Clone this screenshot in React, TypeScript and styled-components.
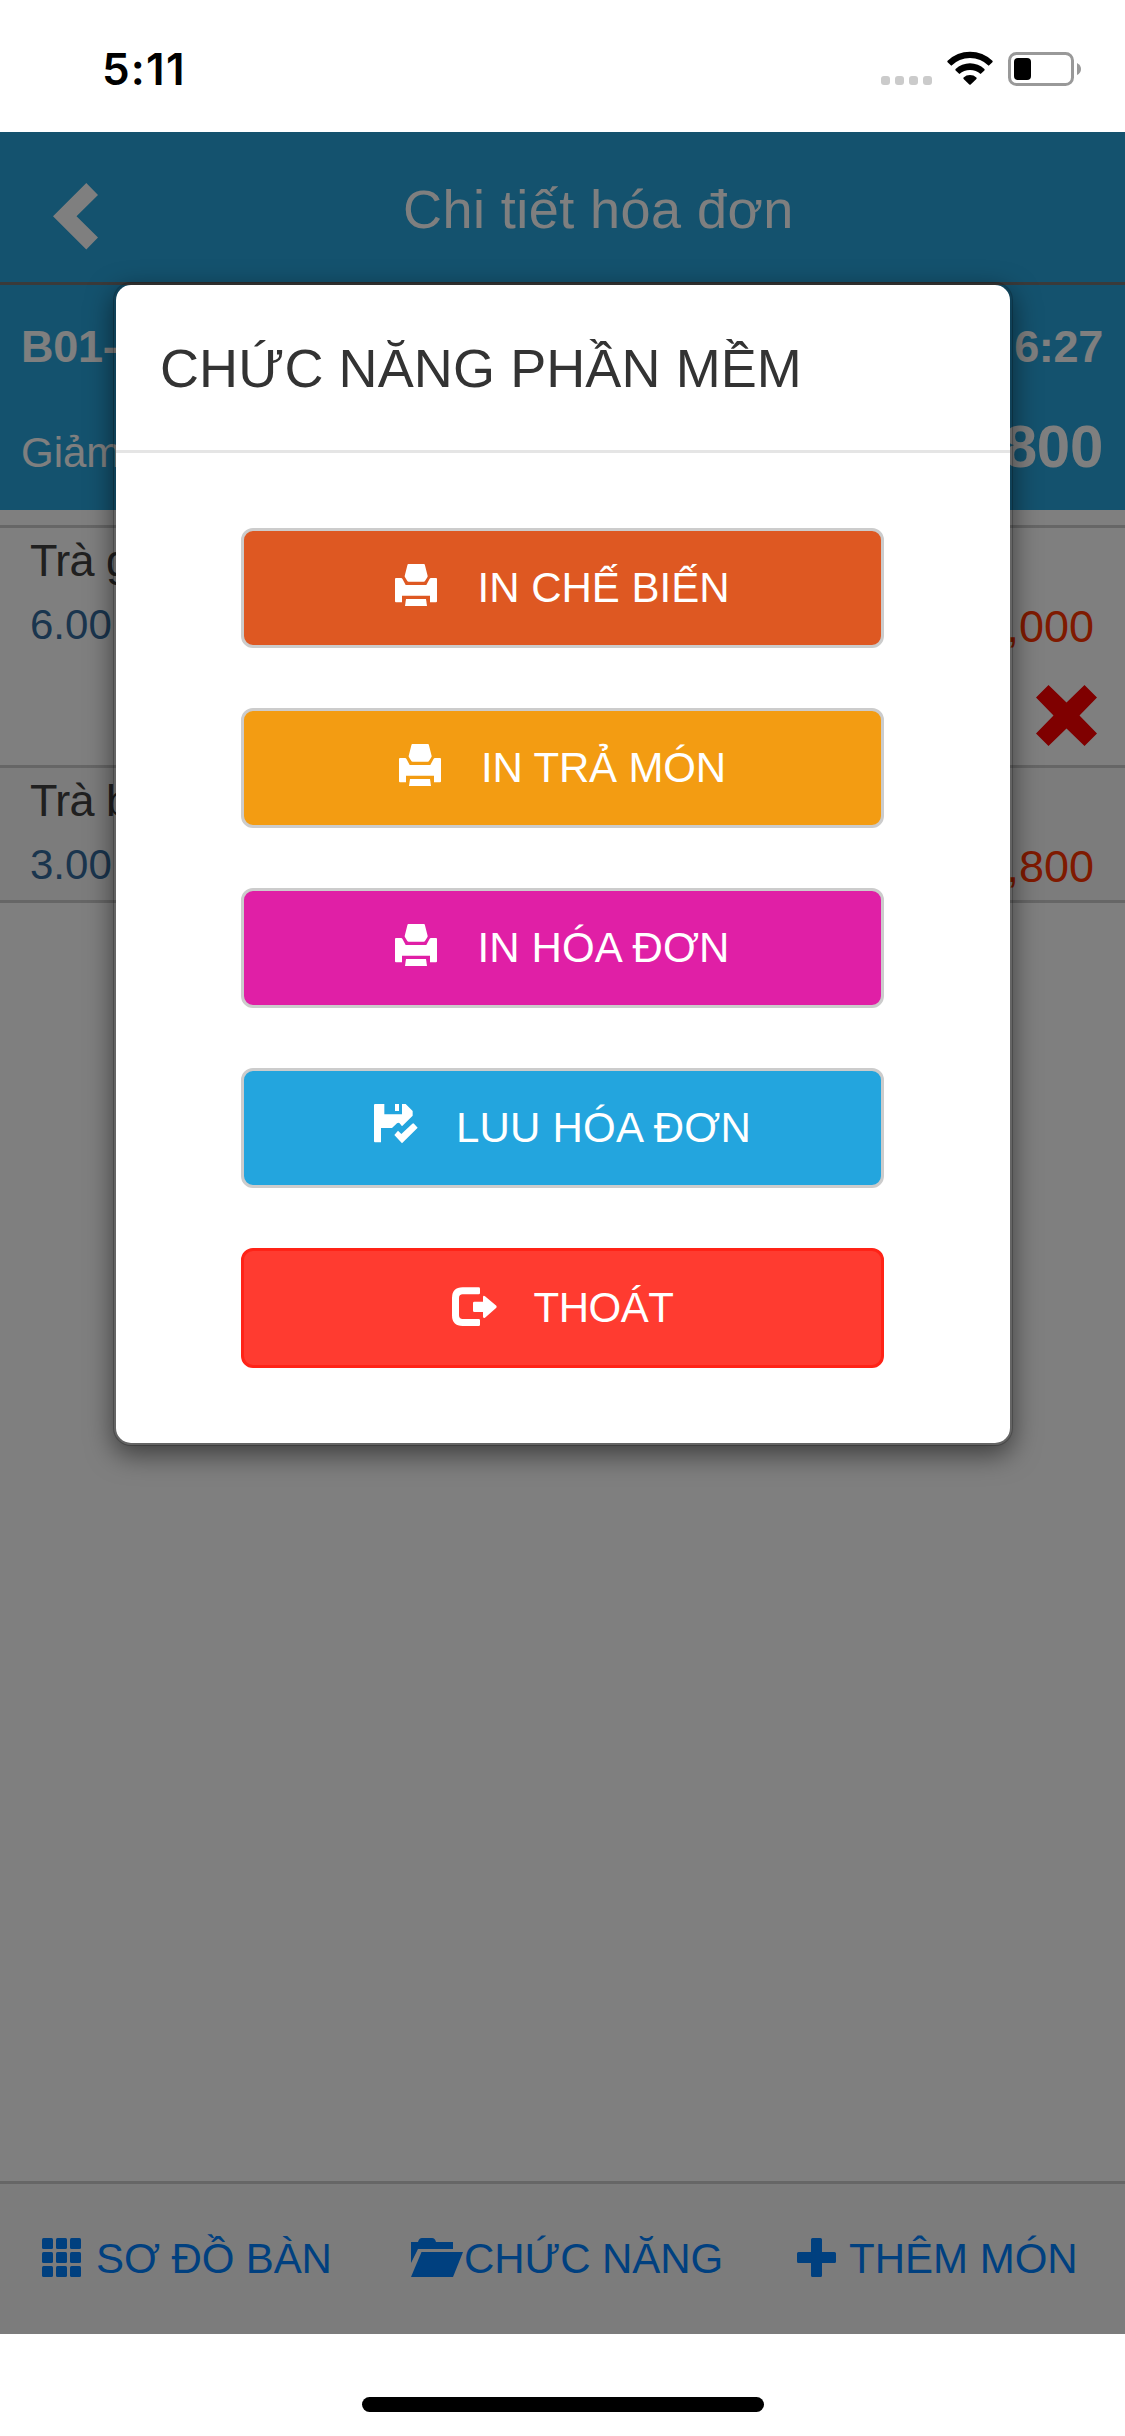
import React from "react";
import styled, { createGlobalStyle } from "styled-components";

const GlobalStyle = createGlobalStyle`
  * { box-sizing: border-box; }
  body { margin: 0; background: #fff; }
`;

const Screen = styled.div`
  position: relative;
  width: 1125px;
  height: 2436px;
  overflow: hidden;
  display: flex;
  flex-direction: column;
  background: #fff;
  font-family: "Liberation Sans", "Helvetica Neue", Arial, sans-serif;
`;

const StatusBar = styled.div`
  height: 132px;
  flex: none;
  display: flex;
  align-items: flex-start;
  padding: 39px 44px 0 102px;
`;

const Clock = styled.div`
  font-family: Inter, sans-serif;
  font-weight: 600;
  font-size: 44px;
  line-height: 60px;
  letter-spacing: 1.2px;
  color: #000;
  margin-right: auto;
`;

const Signal = styled.div`
  display: flex;
  gap: 5px;
  margin: 37px 15px 0 0;
`;

const SignalDot = styled.span`
  width: 9px;
  height: 9px;
  border-radius: 3px;
  background: #cbcbcb;
`;

const WifiIcon = styled.svg`
  width: 46px;
  height: 34px;
  margin: 12px 15px 0 0;
`;

const Battery = styled.svg`
  width: 73px;
  height: 34px;
  margin-top: 13px;
`;

const AppArea = styled.div`
  position: relative;
  height: 2202px;
  flex: none;
  display: flex;
  flex-direction: column;
  background: #fff;
`;

const Header = styled.header`
  height: 153px;
  display: flex;
  align-items: flex-start;
  padding-left: 53px;
  background: #28a4dc;
  border-bottom: 3px solid #747474;
`;

const BackIcon = styled.svg`
  width: 45px;
  height: 67px;
  margin-top: 51px;
`;

const PageTitle = styled.h1`
  margin: 47px 0 0 305px;
  font-size: 54px;
  font-weight: 400;
  line-height: 60px;
  letter-spacing: 0.45px;
  color: #fff;
  white-space: nowrap;
`;

const Summary = styled.section`
  height: 225px;
  padding: 32px 22px 0 21px;
  display: flex;
  flex-direction: column;
  gap: 40px;
  background: #28a4dc;
  color: #fff;
`;

const SummaryLine = styled.div`
  display: flex;
  justify-content: space-between;
  align-items: baseline;
  height: 60px;
`;

const SummaryText = styled.span<{ $size: number; $bold?: boolean }>`
  font-size: ${(p) => p.$size}px;
  font-weight: ${(p) => (p.$bold ? 700 : 400)};
  line-height: 60px;
  letter-spacing: ${(p) => (p.$bold ? -0.3 : 0)}px;
`;

const List = styled.main`
  flex: 1;
  padding-top: 15px;
`;

const ListItem = styled.article<{ $height: number; $striped?: boolean }>`
  height: ${(p) => p.$height}px;
  padding: 3px 28px 0 30px;
  border-top: 3px solid #ccc;
  display: flex;
  flex-direction: column;
  background: ${(p) => (p.$striped ? "#f9f9f9" : "#fff")};
`;

const ListEnd = styled.div`
  height: 3px;
  background: #ccc;
`;

const ItemName = styled.div`
  font-size: 45px;
  line-height: 60px;
  letter-spacing: -0.6px;
  color: #404040;
`;

const ItemMeta = styled.div`
  display: flex;
  justify-content: space-between;
  margin-top: 4px;
  padding-right: 3px;
`;

const Quantity = styled.span`
  font-size: 42px;
  line-height: 60px;
  color: #346a9c;
`;

const Price = styled.span`
  font-size: 45px;
  line-height: 60px;
  padding-top: 2px;
  color: #ff3400;
`;

const RemoveIcon = styled.svg`
  width: 61px;
  height: 61px;
  margin-top: 28px;
  align-self: flex-end;
`;

const Footer = styled.footer`
  height: 153px;
  padding-left: 42px;
  display: flex;
  align-items: center;
  border-top: 3px solid #ccc;
  background: #f8f8f8;
  color: #0080ff;
`;

const FooterItem = styled.div<{ $width: number; $gap: number; $spacing: number }>`
  width: ${(p) => p.$width}px;
  display: flex;
  align-items: center;
  gap: ${(p) => p.$gap}px;
  font-size: 42px;
  line-height: 60px;
  letter-spacing: ${(p) => p.$spacing}px;
  white-space: nowrap;

  svg {
    flex: none;
    height: 39px;
    margin-bottom: 3px;
  }
`;

const Backdrop = styled.div`
  position: absolute;
  inset: 0;
  background: rgba(0, 0, 0, 0.5);
`;

const Dialog = styled.div`
  position: absolute;
  top: 150px;
  left: 113px;
  width: 900px;
  background: #fff;
  background-clip: padding-box;
  border: 3px solid rgba(0, 0, 0, 0.2);
  border-radius: 18px;
  box-shadow: 0 9px 27px rgba(0, 0, 0, 0.5);
`;

const DialogHeader = styled.div`
  height: 168px;
  padding-left: 44px;
  display: flex;
  align-items: center;
  border-bottom: 3px solid #e5e5e5;
`;

const DialogTitle = styled.h2`
  margin: 0;
  font-size: 54px;
  font-weight: 400;
  line-height: 60px;
  letter-spacing: 0.1px;
  color: #333;
  white-space: nowrap;
`;

const DialogBody = styled.div`
  padding: 75px 126px 75px 125px;
  display: flex;
  flex-direction: column;
  gap: 60px;
`;

const ActionButton = styled.button<{ $bg: string; $border?: string; $spacing?: number }>`
  height: 120px;
  padding: 0;
  display: flex;
  align-items: center;
  justify-content: center;
  gap: 40px;
  border: 3px solid ${(p) => p.$border ?? "#ccc"};
  border-radius: 12px;
  background: ${(p) => p.$bg};
  color: #fff;
  font-family: inherit;
  font-size: 42px;
  line-height: 60px;
  letter-spacing: ${(p) => p.$spacing ?? 0}px;

  svg {
    flex: none;
    width: 42px;
    height: 42px;
    margin-bottom: 6px;
    overflow: visible;
  }
`;

const HomeArea = styled.div`
  flex: 1;
  display: flex;
  justify-content: center;
  padding-top: 63px;
`;

const HomeIndicator = styled.div`
  width: 402px;
  height: 15px;
  border-radius: 8px;
  background: #000;
`;

const PrinterIcon = () => (
  <svg viewBox="0 0 126 126" fill="currentColor">
    <path d="M40 0H87Q89 0 89.500 2L98 36Q98 38 97 40L90 51Q89 53 86 53H41Q38 53 37 51L30 40Q29 38 29 36L37.500 2Q38 0 40 0Z" />
    <path d="M0 45Q0 42 3 42H18Q21 42 22.500 45L32 63H94L103.500 45Q105 42 108 42H123Q126 42 126 45V112Q126 115 123 115H105V95H21V115H3Q0 115 0 112Z" />
    <path d="M33 105H93L96 126H30Z" />
  </svg>
);

const SaveIcon = () => (
  <svg viewBox="0 0 126 126" fill="currentColor">
    <path d="M3 0H31V31H84V0H95L116 21V35L84 67L77 58Q73 54 69 58L54 72H21V115H3Q0 115 0 112V3Q0 0 3 0Z" />
    <path d="M63 0H75V21H63Z" />
    <path d="M61 93L72 80L82 90L115 59Q118 57 120 59L131 71L84 118Z" />
  </svg>
);

const ExitIcon = () => (
  <svg viewBox="0 -10 126 126" fill="currentColor">
    <path d="M84 4V17Q84 21 80 21H32Q21 21 21 32V84Q21 95 32 95H80Q84 95 84 99V112Q84 116 80 116H32Q0 116 0 84V32Q0 0 32 0H80Q84 0 84 4Z" />
    <path d="M67 43H93V29Q94 23 99 27L133 55Q135 58 133 61L99 91Q94 94 93 88V74H67Q63 74 63 70V47Q63 43 67 43Z" />
  </svg>
);

const GridIcon = () => (
  <svg width="39" height="39" viewBox="0 0 39 39" fill="currentColor">
    {[0, 14, 28].map((x) =>
      [0, 14, 28].map((y) => <rect key={`${x}-${y}`} x={x} y={y} width="11" height="11" rx="1.500" />)
    )}
  </svg>
);

const FolderIcon = () => (
  <svg width="52" height="39" viewBox="0 0 52 39" fill="currentColor">
    <path d="M0 4H7Q8 0 11 0H21Q24 0 25 4H42V11H7L0 25Z" />
    <path d="M10.500 14H52L42 39H0Z" />
  </svg>
);

const PlusIcon = () => (
  <svg width="39" height="39" viewBox="0 0 39 39" fill="currentColor">
    <path d="M15.500 0H23.500Q25 0 25 1.500V14H37.500Q39 14 39 15.500V23.500Q39 25 37.500 25H25V37.500Q25 39 23.500 39H15.500Q14 39 14 37.500V25H1.500Q0 25 0 23.500V15.500Q0 14 1.500 14H14V1.500Q14 0 15.500 0Z" />
  </svg>
);

export default function App() {
  return (
    <Screen>
      <GlobalStyle />
      <StatusBar>
        <Clock>5:11</Clock>
        <Signal>
          <SignalDot />
          <SignalDot />
          <SignalDot />
          <SignalDot />
        </Signal>
        <WifiIcon viewBox="0 0 46 34">
          <path d="M0.600 9.800A32 32 0 0 1 45.400 9.800Q46 10.500 45.400 11.200L41.700 14.800A26.500 26.500 0 0 0 4.300 14.800L0.600 11.200Q0 10.500 0.600 9.800Z" />
          <path d="M8.600 18.100A20.500 20.500 0 0 1 37.400 18.100Q38 18.800 37.400 19.500L33.600 23.100A15.500 15.500 0 0 0 12.400 23.100L8.600 19.500Q8 18.800 8.600 18.100Z" />
          <path d="M16.600 26.500A9.500 9.500 0 0 1 29.400 26.500Q30 27.200 29.400 27.900L23.700 33.400Q23 34 22.300 33.400L16.600 27.900Q16 27.200 16.600 26.500Z" />
        </WifiIcon>
        <Battery viewBox="0 0 73 34">
          <rect x="1.500" y="1.500" width="63" height="31" rx="7" fill="none" stroke="#999" strokeWidth="3" />
          <rect x="6" y="6" width="17" height="22" rx="4" fill="#000" />
          <path d="M69 11Q73 13 73 17Q73 21 69 23Z" fill="#999" />
        </Battery>
      </StatusBar>
      <AppArea>
        <Header>
          <BackIcon viewBox="0 0 45 67" fill="#fff">
            <path d="M0 33.200L33.300 0L45 12L23.500 33.200L45 54.500L33.300 66.500Z" />
          </BackIcon>
          <PageTitle>Chi tiết hóa đơn</PageTitle>
        </Header>
        <Summary>
          <SummaryLine>
            <SummaryText $size={45} $bold>B01-</SummaryText>
            <SummaryText $size={45} $bold>6:27</SummaryText>
          </SummaryLine>
          <SummaryLine>
            <SummaryText $size={42}>Giảm</SummaryText>
            <SummaryText $size={60} $bold>800</SummaryText>
          </SummaryLine>
        </Summary>
        <List>
          <ListItem $height={240}>
            <ItemName>Trà g</ItemName>
            <ItemMeta>
              <Quantity>6.00</Quantity>
              <Price>,000</Price>
            </ItemMeta>
            <RemoveIcon viewBox="0 0 61 61" fill="#f00">
              <path d="M12.500 0L30.500 17.500L48.500 0L61 12.500L43.500 30.500L61 48.500L48.500 61L30.500 43.500L12.500 61L0 48.500L17.500 30.500L0 12.500Z" />
            </RemoveIcon>
          </ListItem>
          <ListItem $height={135} $striped>
            <ItemName>Trà b</ItemName>
            <ItemMeta>
              <Quantity>3.00</Quantity>
              <Price>,800</Price>
            </ItemMeta>
          </ListItem>
          <ListEnd />
        </List>
        <Footer>
          <FooterItem $width={369} $gap={15} $spacing={-0.1}>
            <GridIcon />
            SƠ ĐỒ BÀN
          </FooterItem>
          <FooterItem $width={386} $gap={1} $spacing={-0.1}>
            <FolderIcon />
            CHỨC NĂNG
          </FooterItem>
          <FooterItem $width={286} $gap={13} $spacing={0}>
            <PlusIcon />
            THÊM MÓN
          </FooterItem>
        </Footer>
        <Backdrop />
        <Dialog>
          <DialogHeader>
            <DialogTitle>CHỨC NĂNG PHẦN MỀM</DialogTitle>
          </DialogHeader>
          <DialogBody>
            <ActionButton $bg="#de5822">
              <PrinterIcon />
              IN CHẾ BIẾN
            </ActionButton>
            <ActionButton $bg="#f39c12" $spacing={-0.15}>
              <PrinterIcon />
              IN TRẢ MÓN
            </ActionButton>
            <ActionButton $bg="#e01fa6" $spacing={0.15}>
              <PrinterIcon />
              IN HÓA ĐƠN
            </ActionButton>
            <ActionButton $bg="#23a5de" $spacing={0.2}>
              <SaveIcon />
              LUU HÓA ĐƠN
            </ActionButton>
            <ActionButton $bg="#ff3b30" $border="#ff2317" $spacing={-0.5}>
              <ExitIcon />
              THOÁT
            </ActionButton>
          </DialogBody>
        </Dialog>
      </AppArea>
      <HomeArea>
        <HomeIndicator />
      </HomeArea>
    </Screen>
  );
}
